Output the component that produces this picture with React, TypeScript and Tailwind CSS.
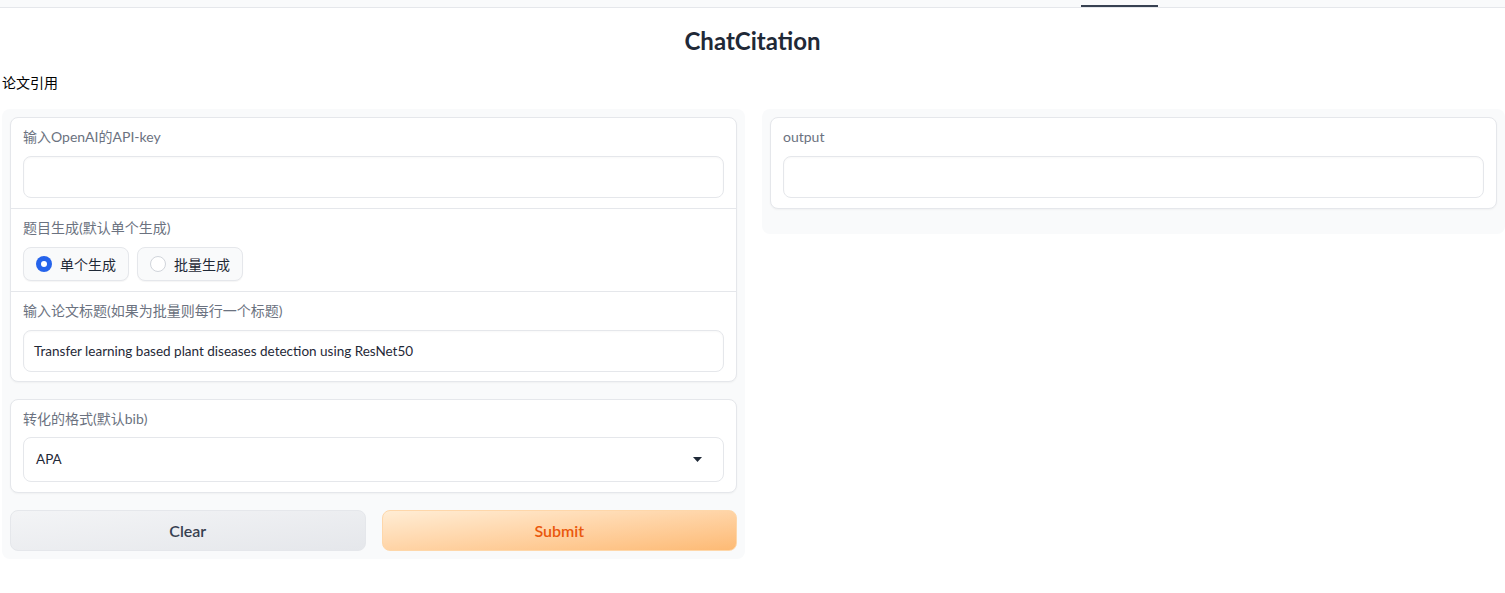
import React from "react";

const font = "font-['Lato','Noto_Sans_CJK_SC',sans-serif]";

function Label({ children }: { children: React.ReactNode }) {
  return <div className="text-[14px] leading-[18px] text-[#6b7280]">{children}</div>;
}

function Radio({ checked, label }: { checked?: boolean; label: string }) {
  return (
    <div className="flex items-center h-[34px] px-[12px] gap-[8px] rounded-[8px] border border-[#e5e7eb] bg-[#f9fafb] shadow-[0_1px_1px_rgba(0,0,0,0.04)]">
      {checked ? (
        <span className="w-[16px] h-[16px] rounded-full bg-[#2563eb] flex items-center justify-center">
          <span className="w-[6px] h-[6px] rounded-full bg-white" />
        </span>
      ) : (
        <span className="w-[16px] h-[16px] rounded-full bg-white border border-[#d1d5db]" />
      )}
      <span className="text-[14px] text-[#1f2937]">{label}</span>
    </div>
  );
}

function Box({ children }: { children?: React.ReactNode }) {
  return (
    <div className="h-[42px] mt-[10px] rounded-[8px] border border-[#e5e7eb] bg-white shadow-[inset_0_1px_2px_rgba(0,0,0,0.03)] flex items-center px-[10px] text-[13.5px] text-[#1f2937]">
      {children}
    </div>
  );
}

export default function App() {
  return (
    <div className={`${font} bg-white min-h-[593px] text-[#1f2937]`}>
      <div className="h-[8px] bg-[#f9fafb] border-b border-[#e5e7eb] flex items-end pl-[1081px]">
        <div className="w-[77px] h-[2px] bg-[#374151]" />
      </div>
      <h1 className="mt-[17px] text-center text-[24px] leading-[32px] font-bold text-[#1f2937]">ChatCitation</h1>
      <div className="mt-[16px] pl-[2px] text-[14px] leading-[20px] text-black">论文引用</div>
      <div className="mt-[16px] pl-[2px] grid grid-cols-2 gap-[17px] items-start">
        <div className="bg-[#f9fafb] rounded-[8px] p-[8px] flex flex-col gap-[17px]">
          <div className="bg-white border border-[#e5e7eb] rounded-[8px] shadow-[0_1px_2px_rgba(0,0,0,0.04)]">
            <div className="px-[12px] py-[10px] border-b border-[#e5e7eb]">
              <Label>输入OpenAI的API-key</Label>
              <Box />
            </div>
            <div className="px-[12px] py-[10px] border-b border-[#e5e7eb]">
              <Label>题目生成(默认单个生成)</Label>
              <div className="mt-[10px] flex gap-[8px]">
                <Radio checked label="单个生成" />
                <Radio label="批量生成" />
              </div>
            </div>
            <div className="px-[12px] pt-[10px] pb-[9px]">
              <Label>输入论文标题(如果为批量则每行一个标题)</Label>
              <Box>Transfer learning based plant diseases detection using ResNet50</Box>
            </div>
          </div>
          <div className="bg-white border border-[#e5e7eb] rounded-[8px] shadow-[0_1px_2px_rgba(0,0,0,0.04)] px-[12px] py-[10px]">
            <Label>转化的格式(默认bib)</Label>
            <div className="h-[45px] mt-[9px] rounded-[8px] border border-[#e5e7eb] bg-white flex items-center justify-between pl-[12px] pr-[21px] text-[13.5px] text-[#1f2937]">
              <span>APA</span>
              <svg width="9" height="5" viewBox="0 0 9 5"><path d="M0 0 L9 0 L4.5 5 Z" fill="#1f2937" /></svg>
            </div>
          </div>
          <div className="grid grid-cols-2 gap-[16px]">
            <button className="h-[41px] rounded-[8px] border border-[#e5e7eb] bg-gradient-to-br from-[#f3f4f6] to-[#e5e7eb] text-[16px] font-semibold text-[#374151]">Clear</button>
            <button className="h-[41px] rounded-[8px] border border-[#fed7aa] bg-gradient-to-br from-[#ffedd5] to-[#fdba74] text-[16px] font-semibold text-[#ea580c]">Submit</button>
          </div>
        </div>
        <div className="bg-[#f9fafb] rounded-[8px] pt-[8px] px-[8px] pb-[25px]">
          <div className="bg-white border border-[#e5e7eb] rounded-[8px] shadow-[0_1px_2px_rgba(0,0,0,0.04)] px-[12px] py-[10px]">
            <Label>output</Label>
            <Box />
          </div>
        </div>
      </div>
    </div>
  );
}
